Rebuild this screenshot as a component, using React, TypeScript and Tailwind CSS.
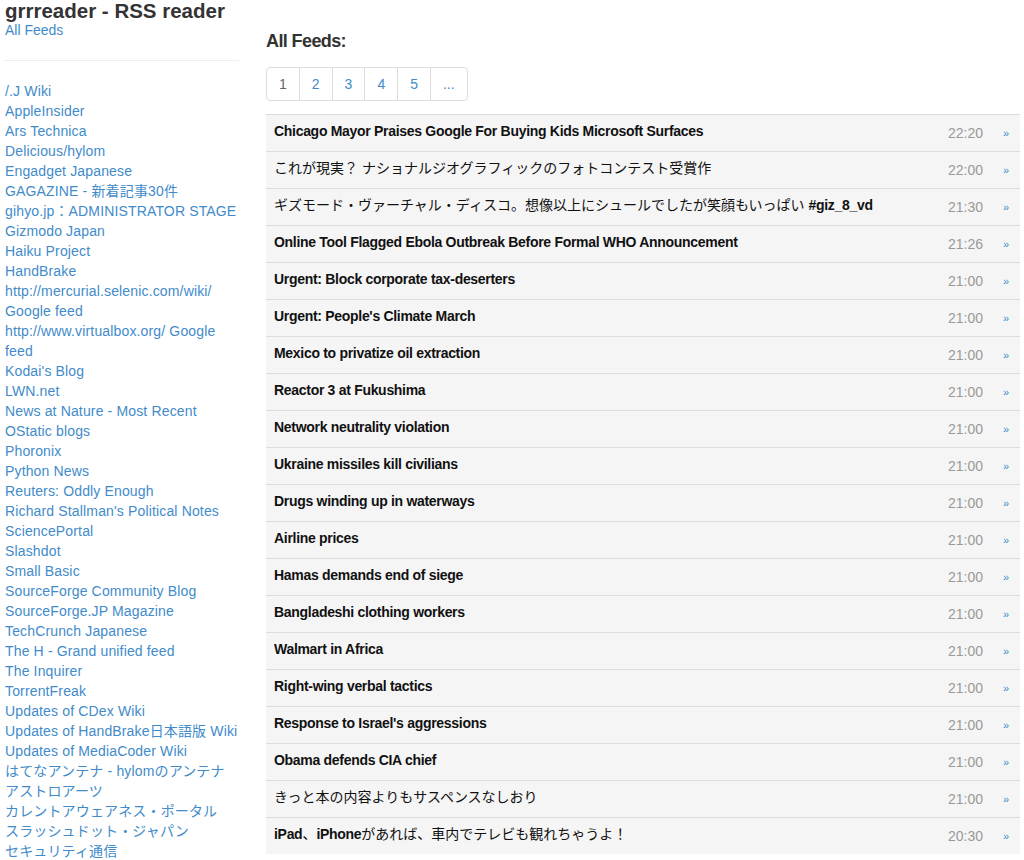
const feeds = [
  '/.J Wiki',
  'AppleInsider',
  'Ars Technica',
  'Delicious/hylom',
  'Engadget Japanese',
  'GAGAZINE - 新着記事30件',
  'gihyo.jp：ADMINISTRATOR STAGE',
  'Gizmodo Japan',
  'Haiku Project',
  'HandBrake',
  'http://mercurial.selenic.com/wiki/ Google feed',
  'http://www.virtualbox.org/ Google feed',
  "Kodai's Blog",
  'LWN.net',
  'News at Nature - Most Recent',
  'OStatic blogs',
  'Phoronix',
  'Python News',
  'Reuters: Oddly Enough',
  "Richard Stallman's Political Notes",
  'SciencePortal',
  'Slashdot',
  'Small Basic',
  'SourceForge Community Blog',
  'SourceForge.JP Magazine',
  'TechCrunch Japanese',
  'The H - Grand unified feed',
  'The Inquirer',
  'TorrentFreak',
  'Updates of CDex Wiki',
  'Updates of HandBrake日本語版 Wiki',
  'Updates of MediaCoder Wiki',
  'はてなアンテナ - hylomのアンテナ',
  'アストロアーツ',
  'カレントアウェアネス・ポータル',
  'スラッシュドット・ジャパン',
  'セキュリティ通信',
]

const items: { title: string; time: string }[] = [
  { title: 'Chicago Mayor Praises Google For Buying Kids Microsoft Surfaces', time: '22:20' },
  { title: 'これが現実？ ナショナルジオグラフィックのフォトコンテスト受賞作', time: '22:00' },
  { title: 'ギズモード・ヴァーチャル・ディスコ。想像以上にシュールでしたが笑顔もいっぱい #giz_8_vd', time: '21:30' },
  { title: 'Online Tool Flagged Ebola Outbreak Before Formal WHO Announcement', time: '21:26' },
  { title: 'Urgent: Block corporate tax-deserters', time: '21:00' },
  { title: "Urgent: People's Climate March", time: '21:00' },
  { title: 'Mexico to privatize oil extraction', time: '21:00' },
  { title: 'Reactor 3 at Fukushima', time: '21:00' },
  { title: 'Network neutrality violation', time: '21:00' },
  { title: 'Ukraine missiles kill civilians', time: '21:00' },
  { title: 'Drugs winding up in waterways', time: '21:00' },
  { title: 'Airline prices', time: '21:00' },
  { title: 'Hamas demands end of siege', time: '21:00' },
  { title: 'Bangladeshi clothing workers', time: '21:00' },
  { title: 'Walmart in Africa', time: '21:00' },
  { title: 'Right-wing verbal tactics', time: '21:00' },
  { title: "Response to Israel's aggressions", time: '21:00' },
  { title: 'Obama defends CIA chief', time: '21:00' },
  { title: 'きっと本の内容よりもサスペンスなしおり', time: '21:00' },
  { title: 'iPad、iPhoneがあれば、車内でテレビも観れちゃうよ！', time: '20:30' },
]

const pages = ['1', '2', '3', '4', '5', '...']

// japanese text has no bold face in the original, only latin parts are bold
const cjk = /([\u3000-\u30ff\u3400-\u9fff\uff00-\uffef][\u3000-\u30ff\u3400-\u9fff\uff00-\uffef\s]*)/

function Title({ text }: { text: string }) {
  const parts = text.split(cjk).filter((p) => p !== '')
  return (
    <>
      {parts.map((p, i) =>
        cjk.test(p) ? (
          <span key={i} className="font-normal tracking-normal">{p}</span>
        ) : (
          <span key={i} className="font-bold tracking-[-0.3px]">{p}</span>
        )
      )}
    </>
  )
}

export default function App() {
  return (
    <div
      className="min-h-screen bg-white text-[#333] text-[14px] leading-[20px] flex pl-[5px] pr-[4px]"
      style={{ fontFamily: '"Liberation Sans", Arial, "Noto Sans CJK JP", sans-serif' }}
    >
      <div className="w-[234px] shrink-0">
        <h1 className="text-[20.5px] leading-[20px] pt-[1px] font-bold text-[#333]">grrreader - RSS reader</h1>
        <a href="#" className="block text-[#428bca] -mt-px">All Feeds</a>
        <hr className="border-0 border-t border-[#eee] mt-[20px] mb-[20px]" />
        <ul className="tracking-[0.15px]">
          {feeds.map((f) => (
            <li key={f}>
              <a href="#" className="text-[#428bca]">{f}</a>
            </li>
          ))}
        </ul>
      </div>

      <div className="ml-[27px] flex-1 min-w-0">
        <h2 className="text-[18px] leading-[20px] font-bold tracking-[-0.6px] mt-[31px]">All Feeds:</h2>
        <ul className="flex mt-[16px]">
          {pages.map((p, i) => (
            <li key={p}>
              <a
                href="#"
                className={
                  'block h-[34px] leading-[20px] py-[6px] px-[12px] border border-[#ddd] ' +
                  (i === 0 ? 'rounded-l-[4px] text-[#666] ' : '-ml-px text-[#428bca] ') +
                  (i === pages.length - 1 ? 'rounded-r-[4px]' : '')
                }
              >
                {p}
              </a>
            </li>
          ))}
        </ul>
        <div className="mt-[13px]">
          {items.map((it) => (
            <div key={it.title} className="flex items-start border-t border-[#ddd] bg-[#f5f5f5] h-[37px] pl-[8px] pt-[6px]">
              <div className="flex-1 min-w-0 truncate text-[#111]">
                <Title text={it.title} />
              </div>
              <div className="text-[#999] w-[60px] text-right mt-[2px]">{it.time}</div>
              <a href="#" className="text-[#428bca] text-[11px] w-[37px] pl-[20px] mt-[2px]">»</a>
            </div>
          ))}
        </div>
      </div>
    </div>
  )
}
